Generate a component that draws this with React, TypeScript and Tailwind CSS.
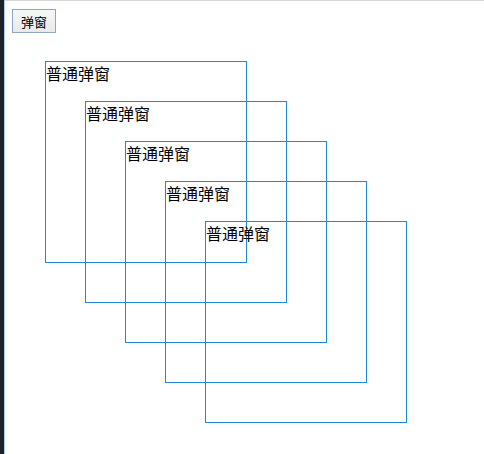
import { useState } from "react";

const offsets = [0, 1, 2, 3, 4];

// positions of the stacked popups, each one 40px further down and right
const popupPos = [
  "left-[45px] top-[61px]",
  "left-[85px] top-[101px]",
  "left-[125px] top-[141px]",
  "left-[165px] top-[181px]",
  "left-[205px] top-[221px]",
];

export default function App() {
  const [count, setCount] = useState(5);

  return (
    <div className="relative flex h-[454px] w-[484px] overflow-hidden bg-white font-['Noto_Sans_CJK_SC',sans-serif]">
      {/* editor strip on the left */}
      <div className="h-full w-[4px] bg-[#1f2329]"></div>
      <div className="h-full w-px bg-[#a9cfe9]"></div>

      {/* page */}
      <div className="flex-1 border-t border-[#d9d9d9] pl-[7px] pt-[8px]">
        <button
          onClick={() => setCount(count < 5 ? count + 1 : 1)}
          className="flex h-[24px] w-[44px] items-center justify-center border border-[#8ea6c6] bg-gradient-to-b from-[#f7f7f7] to-[#e9e9e9] text-[13px] leading-none text-black"
        >
          弹窗
        </button>
      </div>

      {/* POPUPS */}
      {offsets.slice(0, count).map((i) => (
        <div
          key={i}
          className={`absolute ${popupPos[i]} h-[202px] w-[202px] border border-[#1f8ad2] text-[16px] leading-[22px] text-black`}
        >
          <div>普通弹窗</div>
        </div>
      ))}
    </div>
  );
}
